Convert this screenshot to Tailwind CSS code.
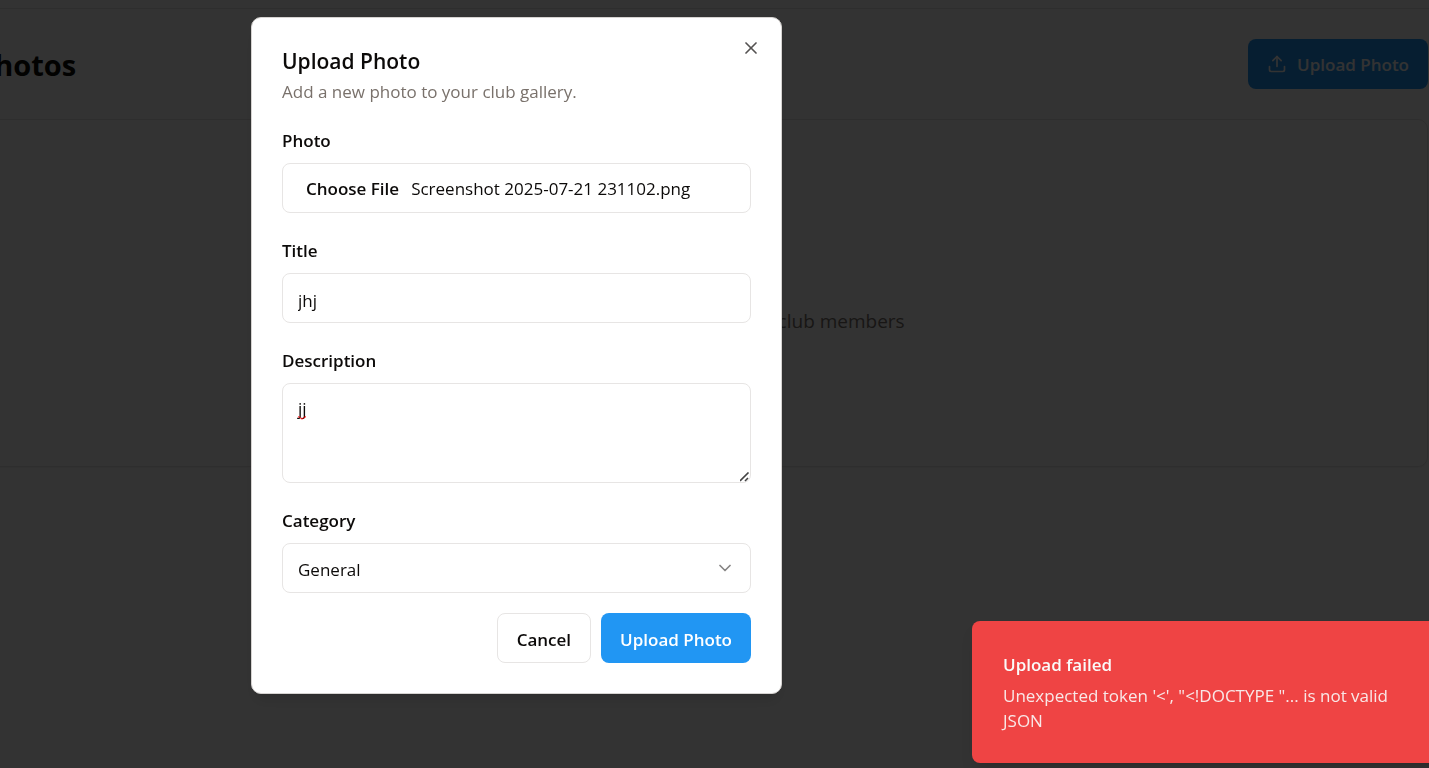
<!DOCTYPE html>
<html lang="en">
<head>
<meta charset="utf-8">
<meta name="viewport" content="width=device-width, initial-scale=1">
<title>Photos</title>
<script src="https://cdn.jsdelivr.net/npm/@tailwindcss/browser@4"></script>
</head>
<body class="min-h-screen overflow-hidden bg-white font-['Segoe_UI','Open_Sans','Noto_Sans',sans-serif] text-[17px] text-stone-950">

<!-- Gallery page -->
<div class="-ml-6 mr-px">
  <div class="-mr-px h-[9px] border-b border-stone-200"></div>
  <main class="pt-[30px]">
    <div class="flex items-center justify-between">
      <h1 class="pt-0.5 text-[29px] leading-10 font-bold">Photos</h1>
      <button type="button" class="flex h-[50px] items-center gap-[10px] rounded-lg bg-[#2196f3] px-[19px] font-semibold text-white">
        <svg class="size-5" viewBox="0 0 24 24" fill="none" stroke="currentColor" stroke-width="2" stroke-linecap="round" stroke-linejoin="round" aria-hidden="true"><path d="M3 15v4a2 2 0 0 0 2 2h14a2 2 0 0 0 2-2v-4"/><path d="M17 8l-5-5-5 5"/><path d="M12 3v12"/></svg>
        <span class="pt-0.5">Upload Photo</span>
      </button>
    </div>
    <section class="mt-[30px] flex h-[348px] items-center rounded-[10px] border border-stone-200 pt-14 pl-[55%] shadow-xs">
      <p class="pl-0.5 text-[19px] text-stone-500">club members</p>
    </section>
  </main>
</div>

<div class="fixed inset-0 bg-black/80"></div>

<!-- Upload dialog -->
<div role="dialog" aria-modal="true" aria-labelledby="dialog-title" class="fixed top-[17px] left-[251px] w-full max-w-[531px] rounded-[10px] border border-stone-300 bg-white px-[30px] pt-[29px] pb-[30px] shadow-lg">
  <h2 id="dialog-title" class="text-[21px] leading-7 font-semibold">Upload Photo</h2>
  <p class="mt-1 leading-[26px] text-stone-500">Add a new photo to your club gallery.</p>
  <button type="button" aria-label="Close" class="absolute top-5 right-5 opacity-70">
    <svg class="size-5" viewBox="0 0 24 24" fill="none" stroke="currentColor" stroke-width="2" stroke-linecap="round" stroke-linejoin="round" aria-hidden="true"><path d="M18 6 6 18"/><path d="m6 6 12 12"/></svg>
  </button>

  <form class="mt-[22px]">
    <div class="flex flex-col gap-6">
      <div class="flex flex-col gap-2">
        <label for="photo" class="leading-7 font-semibold">Photo</label>
        <input id="photo" type="file" class="h-[50px] w-full rounded-lg border border-stone-200 px-[15px] pt-[13px] leading-6 file:mr-1 file:border-0 file:bg-transparent file:px-2 file:font-semibold">
      </div>
      <div class="flex flex-col gap-2">
        <label for="title" class="leading-7 font-semibold">Title</label>
        <input id="title" type="text" value="jhj" class="h-[50px] w-full rounded-lg border border-stone-200 px-[15px] pt-1">
      </div>
      <div class="flex flex-col gap-2">
        <label for="description" class="leading-7 font-semibold">Description</label>
        <div class="relative flex">
          <textarea id="description" spellcheck="false" class="h-[100px] w-full resize-y rounded-lg border border-stone-200 px-[15px] pt-[13px] leading-6 [&::-webkit-resizer]:hidden">jj</textarea>
          <svg class="absolute top-[33px] left-4 h-1 w-2" viewBox="0 0 8 4" fill="none" stroke="#f00" aria-hidden="true"><path d="M0 1 1 .8 2 1.5 4 3.2 6 1.5 7 .8 8 1"/></svg>
          <svg class="pointer-events-none absolute right-px bottom-px size-[10px]" viewBox="0 0 10 10" fill="none" stroke="#444" stroke-width="1.6" aria-hidden="true"><path d="M0 9 8.500 .5M5 9l3-3"/></svg>
        </div>
      </div>
      <div class="flex flex-col gap-2">
        <label for="category" class="leading-7 font-semibold">Category</label>
        <div class="relative">
          <select id="category" class="block h-[50px] w-full appearance-none rounded-lg border border-stone-200 bg-white px-[15px] pt-1"><option>General</option></select>
          <svg class="pointer-events-none absolute top-[15px] right-4 size-5 opacity-50" viewBox="0 0 24 24" fill="none" stroke="currentColor" stroke-width="2" stroke-linecap="round" stroke-linejoin="round" aria-hidden="true"><path d="m6 9 6 6 6-6"/></svg>
        </div>
      </div>
    </div>
    <div class="mt-5 flex justify-end gap-[10px]">
      <button type="button" class="h-[50px] rounded-lg border border-stone-200 bg-white px-[19px] pt-1 font-semibold">Cancel</button>
      <button type="submit" class="h-[50px] rounded-lg bg-[#2196f3] px-[19px] pt-1 font-semibold text-white">Upload Photo</button>
    </div>
  </form>
</div>

<!-- Error toast -->
<div role="alert" class="fixed -right-7 bottom-[5px] w-[485px] rounded-lg bg-[#ef4444] pt-8 pr-10 pb-[30px] pl-[31px] text-stone-50 shadow-lg">
  <p class="leading-6 font-semibold">Upload failed</p>
  <p class="mt-1.5 leading-[25px] opacity-90">Unexpected token '&lt;', "&lt;!DOCTYPE "... is not valid JSON</p>
</div>

<script>
  const chosen = new DataTransfer();
  chosen.items.add(new File([''], 'Screenshot 2025-07-21 231102.png', { type: 'image/png' }));
  document.getElementById('photo').files = chosen.files;
</script>
</body>
</html>
